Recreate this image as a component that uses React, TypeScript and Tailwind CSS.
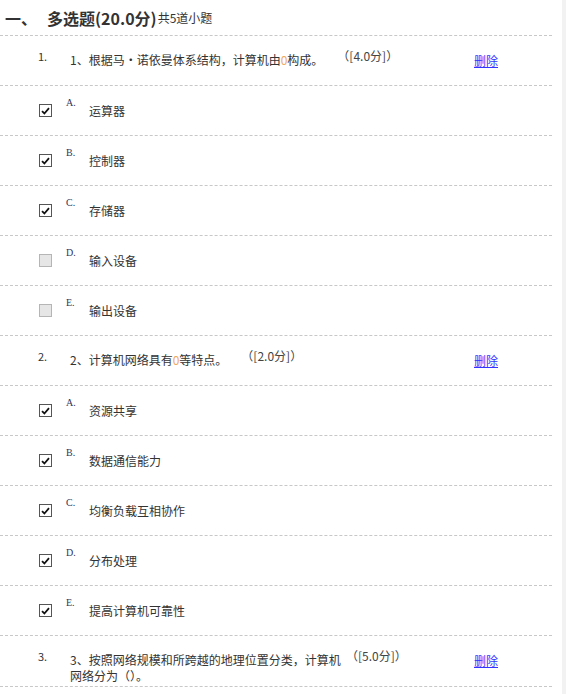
import React from "react";

type Option = { letter: string; text: string; checked: boolean };
type Question = {
  no: number;
  before: string;
  blank?: boolean;
  after: string;
  score: string;
  wraps?: boolean;
  options: Option[];
};

const questions: Question[] = [
  {
    no: 1,
    before: "、根据马·诺依曼体系结构，计算机由",
    blank: true,
    after: "构成。",
    score: "4.0",
    options: [
      { letter: "A.", text: "运算器", checked: true },
      { letter: "B.", text: "控制器", checked: true },
      { letter: "C.", text: "存储器", checked: true },
      { letter: "D.", text: "输入设备", checked: false },
      { letter: "E.", text: "输出设备", checked: false },
    ],
  },
  {
    no: 2,
    before: "、计算机网络具有",
    blank: true,
    after: "等特点。",
    score: "2.0",
    options: [
      { letter: "A.", text: "资源共享", checked: true },
      { letter: "B.", text: "数据通信能力", checked: true },
      { letter: "C.", text: "均衡负载互相协作", checked: true },
      { letter: "D.", text: "分布处理", checked: true },
      { letter: "E.", text: "提高计算机可靠性", checked: true },
    ],
  },
  {
    no: 3,
    before: "、按照网络规模和所跨越的地理位置分类，计算机网络分为（）。",
    after: "",
    score: "5.0",
    wraps: true,
    options: [],
  },
];

const font = { fontFamily: '"Noto Sans CJK SC", "DejaVu Sans", sans-serif' };

function Checkbox({ checked }: { checked: boolean }) {
  if (!checked) {
    return <span className="block h-[13px] w-[13px] border border-[#b5b5b5] bg-[#e6e6e6]" />;
  }
  return (
    <span className="flex h-[13px] w-[13px] items-center justify-center border border-[#555] bg-white">
      <svg width="9" height="8" viewBox="0 0 9 8">
        <path d="M1 4.2 L3.4 6.5 L8 1.2" fill="none" stroke="#111" strokeWidth="1.8" />
      </svg>
    </span>
  );
}

function QuestionRow({ q }: { q: Question }) {
  return (
    <div className="flex min-h-[50px] border-b border-dashed border-[#c8c8c8]">
      <div className="flex flex-1 pl-[38px]">
        <span className="mt-[12px] w-[32px] shrink-0 text-[11px] text-[#333]">{q.no}.</span>
        <span className="mt-[16px] mb-[2px] max-w-[274px] text-[12px] leading-[16px] text-[#333]">
          {`${q.no}${q.before}`}
          {q.blank && <span className="text-[#f0a860]">0</span>}
          {q.after}
        </span>
        <span className={`mt-[11px] text-[12px] text-[#444] ${q.wraps ? "ml-[2px]" : "ml-[14px]"}`}>
          （[{q.score}分]）
        </span>
      </div>
      <div className="flex w-[78px] items-center">
        <a href="#" className="text-[12px] text-[#3333ff] underline">
          删除
        </a>
      </div>
    </div>
  );
}

function OptionRow({ o }: { o: Option }) {
  return (
    <div className="flex h-[50px] items-center border-b border-dashed border-[#c8c8c8] pl-[39px]">
      <Checkbox checked={o.checked} />
      <span
        className="ml-[14px] mb-[16px] w-[23px] text-[10px] text-[#335]"
        style={{ fontFamily: '"Liberation Serif", serif' }}
      >
        {o.letter}
      </span>
      <span className="text-[12px] text-[#333]">{o.text}</span>
    </div>
  );
}

export default function App() {
  return (
    <div className="flex min-h-[694px] bg-white" style={font}>
      <div className="w-[562px] bg-white">
        <div className="w-[552px]">
          <div className="flex h-[36px] items-center border-b border-dashed border-[#c8c8c8] pl-[5px]">
            <span className="text-[16px] font-bold text-[#333]">一、</span>
            <span className="ml-[10px] text-[16px] font-bold text-[#333]">多选题(20.0分)</span>
            <span className="ml-[1px] text-[12px] text-[#333]">共5道小题</span>
          </div>
          {questions.map((q) => (
            <div key={q.no}>
              <QuestionRow q={q} />
              {q.options.map((o) => (
                <OptionRow key={o.letter} o={o} />
              ))}
            </div>
          ))}
        </div>
      </div>
      <div className="flex-1 bg-[#f2f2f2]" />
    </div>
  );
}
